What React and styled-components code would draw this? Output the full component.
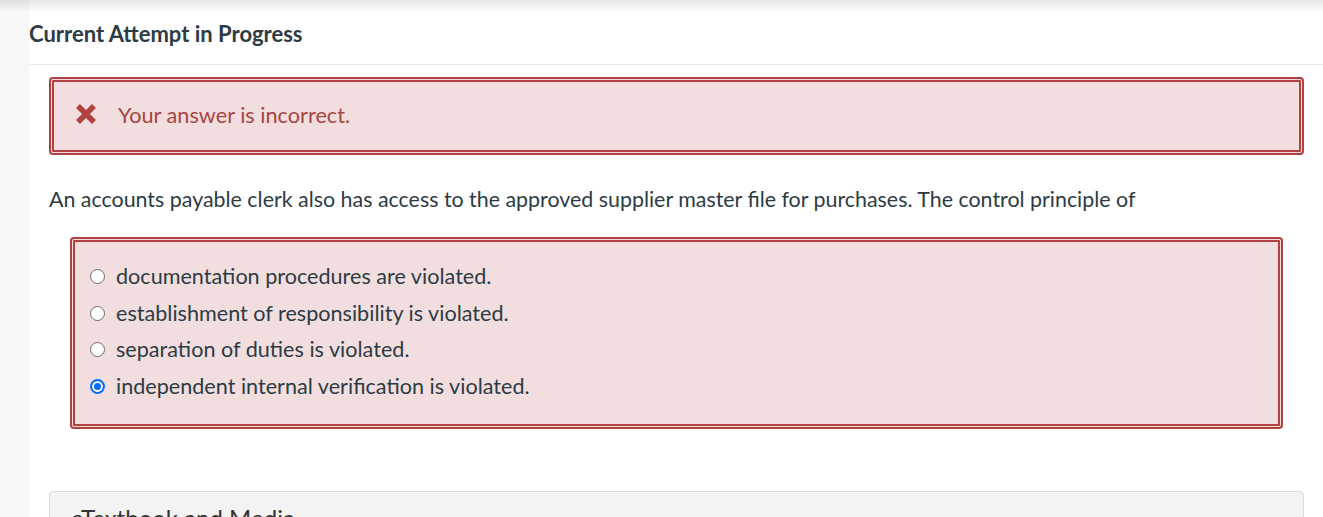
import React from 'react';
import styled, { createGlobalStyle } from 'styled-components';

const GlobalStyle = createGlobalStyle`
  html, body {
    margin: 0;
    padding: 0;
    background: #ffffff;
    font-family: Lato, "Open Sans", "Liberation Sans", sans-serif;
    overflow: hidden;
  }
`;

const Page = styled.div`
  position: relative;
  display: flex;
  height: 517px;
  overflow: hidden;
  &::before {
    content: '';
    position: absolute;
    top: 0;
    left: 0;
    right: 0;
    height: 12px;
    background: linear-gradient(rgba(0,0,0,0.1), rgba(0,0,0,0));
    pointer-events: none;
  }
`;

const Sidebar = styled.div`
  width: 29px;
  flex: none;
  background: #f7f7f7;
`;

const Main = styled.main`
  flex: 1;
  background: #fff;
`;

const Header = styled.header`
  height: 64px;
  display: flex;
  align-items: center;
  border-bottom: 1px solid #e8e8e8;
`;

const Title = styled.h2`
  margin: 0;
  padding-top: 2px;
  font-size: 22px;
  font-weight: 700;
  color: #2d3b45;
`;

const Content = styled.div`
  padding: 12px 19px 0 20px;
`;

const Alert = styled.div`
  display: flex;
  align-items: center;
  gap: 22px;
  height: 78px;
  box-sizing: border-box;
  padding: 0 0 3px 22px;
  border: 5px double #b0413e;
  border-radius: 4px;
  background: #f2dede;
  color: #a94442;
  font-size: 21.7px;
`;

const IconBox = styled.svg`
  flex: none;
  margin-top: -2px;
`;

const Question = styled.p`
  margin: 32px 0 0;
  font-size: 21.4px;
  color: #2d3b45;
  line-height: 24px;
`;

const Options = styled.div`
  margin: 26px 21px 0;
  padding: 16px 15px 20px;
  border: 5px double #b0413e;
  border-radius: 4px;
  background: #f2dede;
`;

const Option = styled.label`
  display: flex;
  align-items: center;
  gap: 11px;
  height: 36.5px;
  font-size: 21.6px;
  color: #2d3b45;
`;

const Radio = styled.span`
  width: 15px;
  height: 15px;
  box-sizing: border-box;
  border-radius: 50%;
  flex: none;
  margin-top: 1px;
  border: ${p => (p.checked ? '2px solid #0b6cf5' : '1px solid #6b6b6b')};
  background: ${p => (p.checked ? '#0b6cf5' : '#fff')};
  box-shadow: ${p => (p.checked ? 'inset 0 0 0 2px #fff' : 'none')};
`;

const Card = styled.div`
  margin-top: 62px;
  height: 60px;
  border: 1px solid #dcdcdc;
  border-radius: 4px;
  background: #f3f3f3;
  padding: 10px 21px;
  box-sizing: border-box;
  font-size: 24px;
  color: #333;
`;

const CardTitle = styled.div`
  margin-top: 1px;
`;

const XIcon = () => (
  <IconBox width="20" height="20" viewBox="0 0 20 20">
    <path d="M2 2 L18 18 M18 2 L2 18" stroke="#b0413e" strokeWidth="5.5" strokeLinecap="butt" />
  </IconBox>
);

const choices = [
  'documentation procedures are violated.',
  'establishment of responsibility is violated.',
  'separation of duties is violated.',
  'independent internal verification is violated.',
];

export default function App() {
  return (
    <>
      <GlobalStyle />
      <Page>
        <Sidebar />
        <Main>
          <Header>
            <Title>Current Attempt in Progress</Title>
          </Header>
          <Content>
            <Alert>
              <XIcon />
              <span>Your answer is incorrect.</span>
            </Alert>
            <Question>
              An accounts payable clerk also has access to the approved supplier master file for purchases. The control principle of
            </Question>
            <Options>
              {choices.map((c, i) => (
                <Option key={c}>
                  <Radio checked={i === 3} />
                  {c}
                </Option>
              ))}
            </Options>
            <Card>
              <CardTitle>eTextbook and Media</CardTitle>
            </Card>
          </Content>
        </Main>
      </Page>
    </>
  );
}
